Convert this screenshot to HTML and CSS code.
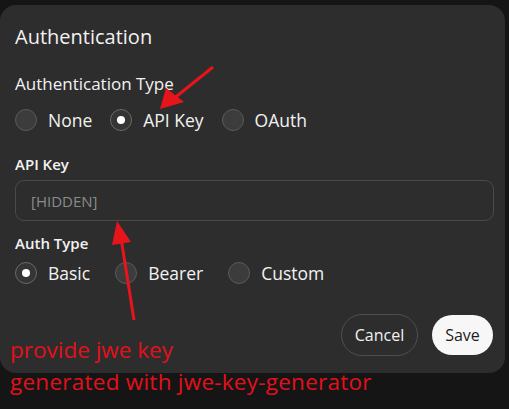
FILE: index.html
```html
<!DOCTYPE html>
<html>
<head>
<meta charset="utf-8">
<link rel="stylesheet" href="styles.css">
</head>
<body>
<div class="stage">
  <div class="dialog">
    <h2 class="title">Authentication</h2>
    <div class="section-label">Authentication Type</div>
    <div class="radio-row">
      <label class="radio"><span class="dot"></span><span>None</span></label>
      <label class="radio"><span class="dot on"></span><span>API Key</span></label>
      <label class="radio"><span class="dot"></span><span>OAuth</span></label>
    </div>
    <div class="field-label">API Key</div>
    <div class="input"><span class="placeholder">[HIDDEN]</span></div>
    <div class="field-label second">Auth Type</div>
    <div class="radio-row small">
      <label class="radio"><span class="dot on"></span><span>Basic</span></label>
      <label class="radio"><span class="dot"></span><span>Bearer</span></label>
      <label class="radio"><span class="dot"></span><span>Custom</span></label>
    </div>
    <div class="actions">
      <button class="btn cancel">Cancel</button>
      <button class="btn save">Save</button>
    </div>
  </div>
  <div class="note">
    <div>provide jwe key</div>
    <div class="wide">generated with jwe-key-generator</div>
  </div>
  <svg class="arrows" width="509" height="409" viewBox="0 0 509 409">
    <line x1="213" y1="67" x2="172" y2="100" stroke="#e8141c" stroke-width="3"/>
    <polygon points="160,109 166,88 184,102" fill="#e8141c"/>
    <line x1="134" y1="320" x2="121" y2="238" stroke="#e8141c" stroke-width="3"/>
    <polygon points="117,221 112,245 131,242" fill="#e8141c"/>
  </svg>
</div>
</body>
</html>
```

FILE: styles.css
```css
* { box-sizing: border-box; }
html, body { margin: 0; padding: 0; }
body {
  background: #151515;
  font-family: "Open Sans", "Noto Sans", sans-serif;
  color: #f2f2f2;
  width: 509px;
  height: 409px;
  overflow: hidden;
}
.stage { position: relative; width: 509px; height: 409px; padding-top: 5px; }
.dialog {
  width: 505px;
  height: 368px;
  background: #2d2d2d;
  border-radius: 16px;
  padding: 21px 15px 0 15px;
  display: flex;
  flex-direction: column;
}
.title { margin: 0; font-size: 20px; font-weight: 400; line-height: 22px; }
.section-label { margin-top: 25px; font-size: 17px; line-height: 22px; }
.radio-row { display: flex; gap: 18px; margin-top: 11px; height: 28px; align-items: center; }
.radio-row.small { margin-top: 6px; gap: 25px; }
.radio { display: flex; align-items: center; gap: 11px; font-size: 17.5px; }
.dot {
  width: 22px; height: 22px; border-radius: 50%;
  border: 1px solid #5a5a5a;
  background: #3c3c3c;
  display: flex; align-items: center; justify-content: center;
}
.dot.on { background: #353535; border-color: #6a6a6a; }
.dot.on::after { content: ""; width: 8px; height: 8px; border-radius: 50%; background: #fff; }
.field-label { margin-top: 20px; font-size: 15px; font-weight: 600; line-height: 20px; }
.field-label.second { margin-top: 12px; }
.input {
  margin-top: 6px;
  width: 479px; height: 41px;
  border: 1px solid #4a4a4a;
  border-radius: 9px;
  padding: 0 15px;
  display: flex; align-items: center;
}
.placeholder { color: #8b8b8b; font-size: 15px; }
.actions { display: flex; justify-content: flex-end; gap: 14px; margin-top: 27px; margin-right: -3px; }
.btn { font-family: inherit; font-size: 16px; height: 42px; border-radius: 21px; cursor: pointer; }
.cancel { background: transparent; color: #f2f2f2; border: 1px solid #4e4e4e; width: 77px; }
.save { background: #f7f7f7; color: #1e1e1e; border: none; width: 61px; height: 40px; margin-top: 1px; }
.note {
  position: absolute; left: 10px; top: 334px;
  color: #e3101c; font-size: 22.5px; line-height: 32px;
}
.note .wide { letter-spacing: 0.25px; }
.arrows { position: absolute; left: 0; top: 0; }
```
